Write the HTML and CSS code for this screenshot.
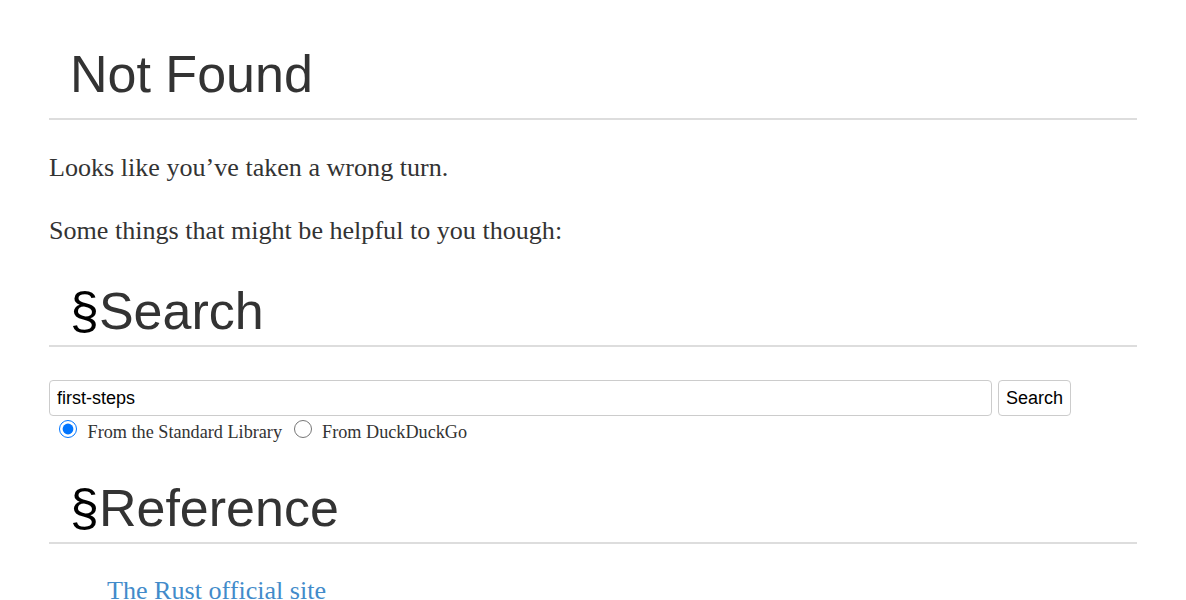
FILE: index.html
```html
<!DOCTYPE html>
<html lang="en">
<head>
<meta charset="utf-8">
<title>Not Found</title>
<link rel="stylesheet" href="styles.css">
</head>
<body>
<main class="page">
  <h1 class="title">Not Found</h1>
  <p class="text">Looks like you’ve taken a wrong turn.</p>
  <p class="text">Some things that might be helpful to you though:</p>

  <h2 class="section"><a class="anchor" href="#search">§</a>Search</h2>
  <form class="search-form">
    <div class="search-row">
      <input class="search-input" type="search" value="first-steps">
      <button class="search-button" type="button">Search</button>
    </div>
    <div class="radio-row">
      <input class="radio" type="radio" name="src" id="std" checked>
      <label class="radio-label" for="std">From the Standard Library</label>
      <input class="radio" type="radio" name="src" id="ddg">
      <label class="radio-label" for="ddg">From DuckDuckGo</label>
    </div>
  </form>

  <h2 class="section"><a class="anchor" href="#reference">§</a>Reference</h2>
  <ul class="links">
    <li><a class="link" href="#">The Rust official site</a></li>
  </ul>
</main>
</body>
</html>
```

FILE: styles.css
```css
html, body {
  margin: 0;
  padding: 0;
  background: #fff;
}

.page {
  width: 1088px;
  margin: 0 auto;
  color: #333;
  font-family: "Liberation Serif", "Times New Roman", serif;
  font-size: 26.1px;
  line-height: 1.4;
}

.title,
.section {
  font-family: "Liberation Sans", Arial, sans-serif;
  font-weight: normal;
  font-size: 52px;
  line-height: 60px;
  color: #333;
  padding-left: 21px;
  border-bottom: 2px solid #ddd;
}

.title {
  margin: 44px 0 30px;
  padding-bottom: 14px;
}

.section {
  margin: 32px 0 0;
  padding-bottom: 4px;
}

.anchor {
  color: #000;
  text-decoration: none;
}

.text {
  margin: 0 0 26px;
}

.search-form {
  margin: 33px 0 0;
}

.search-row {
  display: flex;
  align-items: center;
  gap: 6px;
}

.search-input {
  box-sizing: border-box;
  width: 943px;
  height: 36px;
  margin: 0;
  padding: 0 7px;
  border: 1px solid #ccc;
  border-radius: 4px;
  font-family: "Liberation Sans", Arial, sans-serif;
  font-size: 18px;
  color: #000;
  background: #fff;
  outline: none;
}

.search-button {
  box-sizing: border-box;
  height: 36px;
  margin: 0;
  padding: 0 7px;
  border: 1px solid #ccc;
  border-radius: 4px;
  background: #fff;
  font-family: "Liberation Sans", Arial, sans-serif;
  font-size: 18px;
  color: #000;
}

.radio-row {
  margin-top: 4px;
  font-size: 18.2px;
  line-height: 1.4;
}

.radio {
  width: 18px;
  height: 18px;
  margin: 0 6px 0 10px;
  vertical-align: 0;
  accent-color: #0075ff;
}

.radio + .radio-label + .radio {
  margin-left: 7px;
}

.radio-label {
  color: #333;
}

.links {
  list-style: none;
  margin: 29px 0 0;
  padding-left: 58px;
}

.link {
  color: #428bca;
  text-decoration: none;
}
```
